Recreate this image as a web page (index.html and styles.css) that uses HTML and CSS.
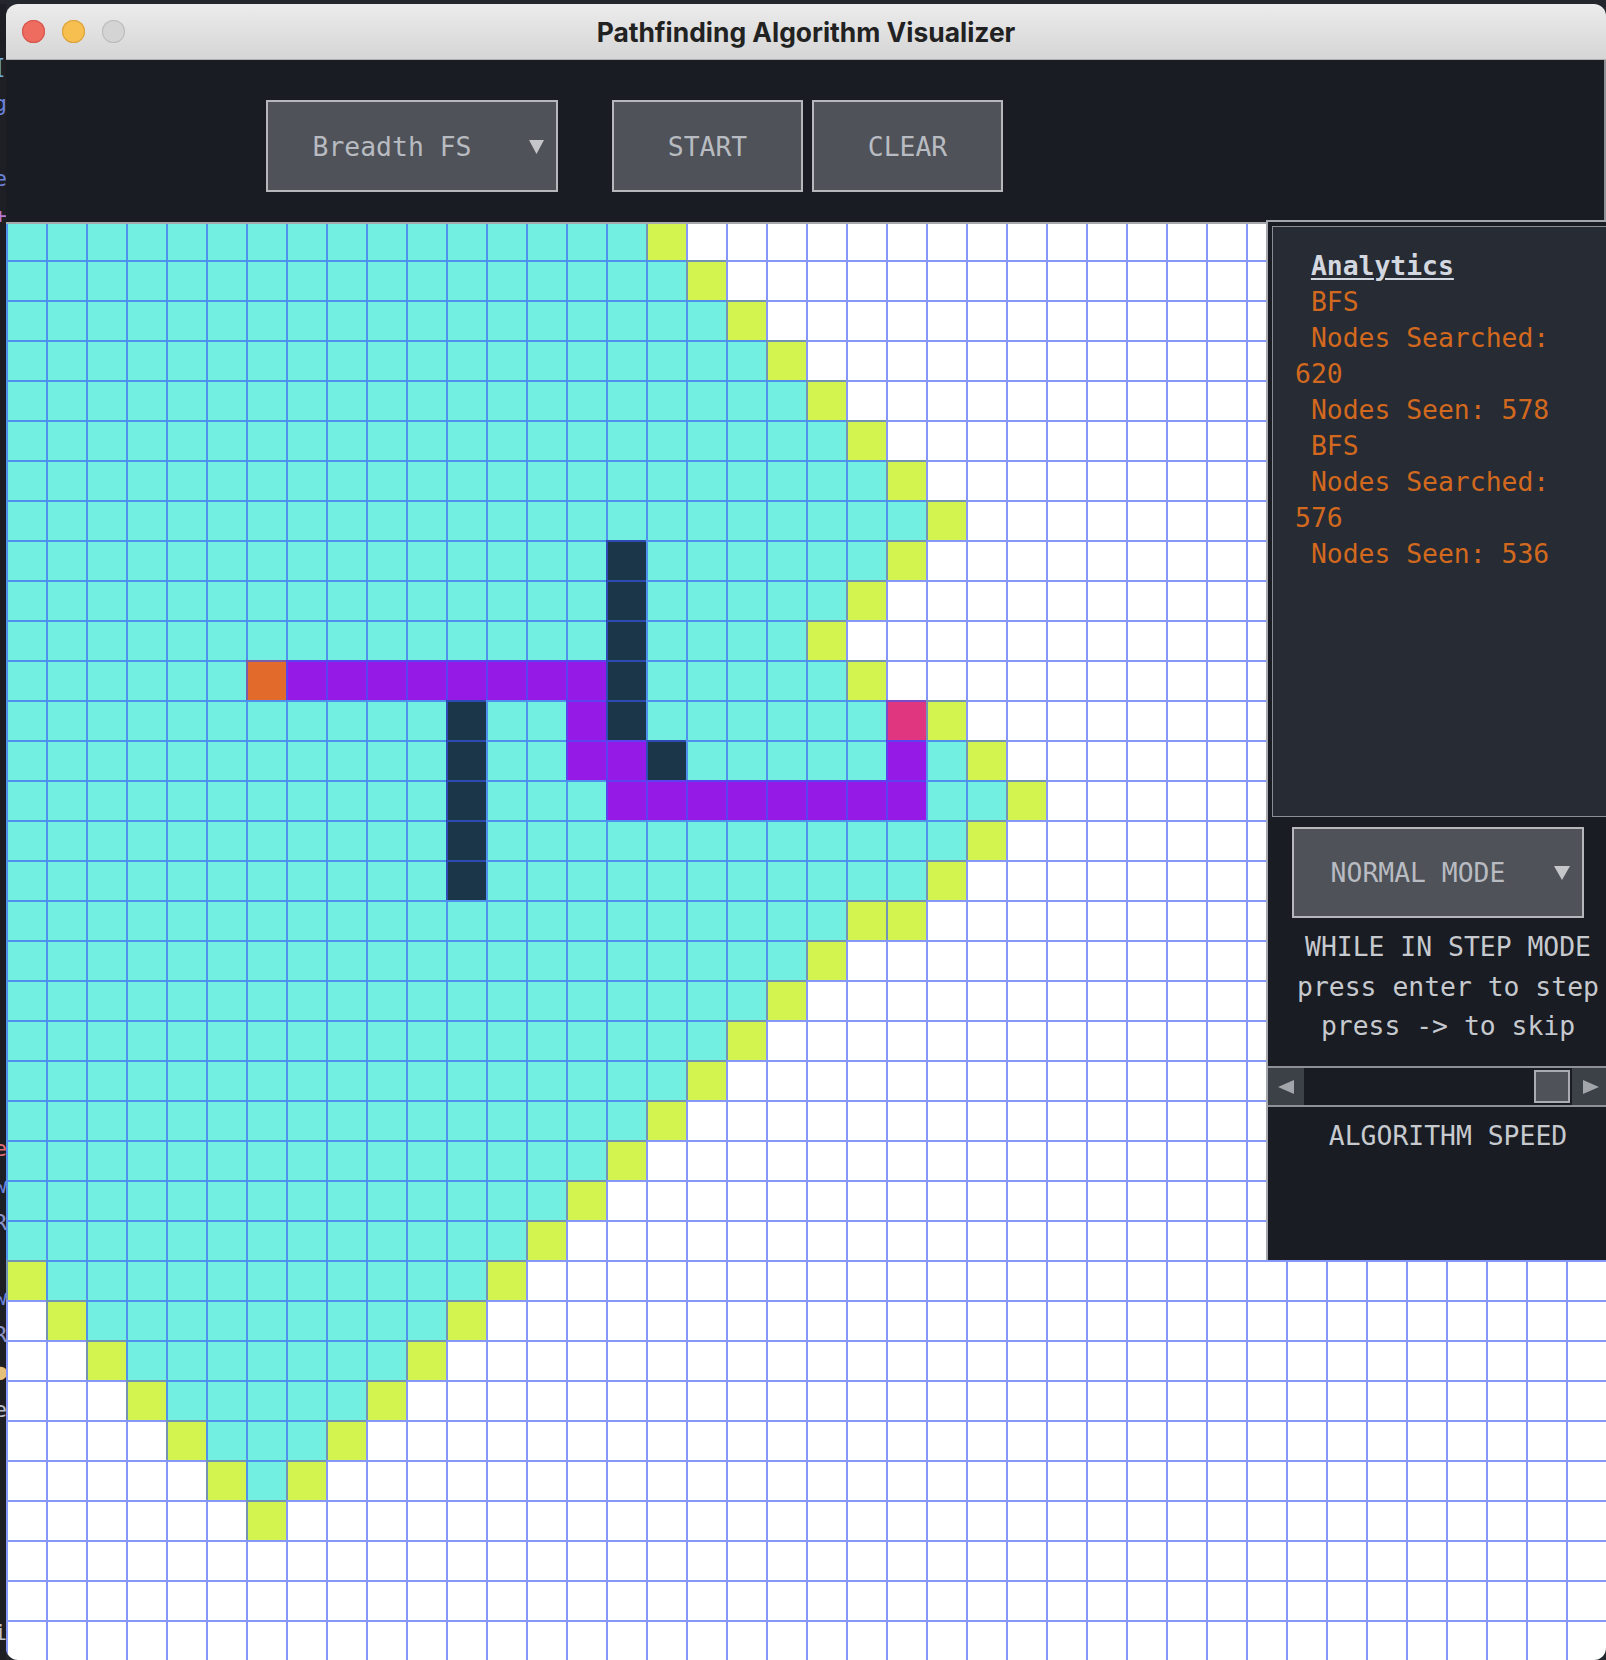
FILE: index.html
```html
<!DOCTYPE html>
<html lang="en">
<head>
<meta charset="utf-8">
<title>Pathfinding Algorithm Visualizer</title>
<link rel="stylesheet" href="styles.css">
</head>
<body>
<div class="backdrop" aria-hidden="true">
<pre class="code"><span class="k-cyan">[</span>
<span class="k-blue">g</span>

<span class="k-blue">e</span>
<span class="k-purple">+</span>
























<span class="k-red">e</span>
<span class="k-blue">w</span>
<span class="k-grey">R</span>

<span class="k-blue">w</span>
<span class="k-grey">R</span>
<span class="k-yellow">●</span>
<span class="k-white">e</span>





<span class="k-white">i</span></pre>
</div>
<div class="window">
  <div class="titlebar">
    <div class="lights">
      <span class="light red"></span>
      <span class="light yellow"></span>
      <span class="light grey"></span>
    </div>
    <div class="title">Pathfinding Algorithm Visualizer</div>
    <div></div>
  </div>
  <div class="header">
    <div class="select algo">
      <span class="select-label">Breadth FS</span>
      <span class="select-arrow"><svg width="15" height="15" viewBox="0 0 15 15"><polygon points="0,1 15,1 7.5,15" fill="#c4c6ca"/></svg></span>
    </div>
    <div class="btn start">START</div>
    <div class="btn clear">CLEAR</div>
  </div>
  <div class="main">
    <div class="board"><div class="grid" id="grid"></div></div>
    <aside class="side">
      <div class="analytics">
        <div class="a-title">Analytics</div>
        <div class="a-line">BFS</div>
        <div class="a-line">Nodes Searched: 620</div>
        <div class="a-line">Nodes Seen: 578</div>
        <div class="a-line">BFS</div>
        <div class="a-line">Nodes Searched: 576</div>
        <div class="a-line">Nodes Seen: 536</div>
      </div>
      <div class="select mode">
        <span class="select-label">NORMAL MODE</span>
        <span class="select-arrow"><svg width="16" height="15" viewBox="0 0 16 15"><polygon points="0,1 16,1 8,15" fill="#c4c6ca"/></svg></span>
      </div>
      <div class="hint">WHILE IN STEP MODE<br>press enter to step<br>press -&gt; to skip</div>
      <div class="slider">
        <div class="s-btn"><svg width="16" height="14" viewBox="0 0 16 14"><polygon points="16,0 16,14 0,7" fill="#a2a5aa"/></svg></div>
        <div class="track"><div class="thumb"></div></div>
        <div class="s-btn right"><svg width="16" height="14" viewBox="0 0 16 14"><polygon points="0,0 0,14 16,7" fill="#a2a5aa"/></svg></div>
      </div>
      <div class="speed-label">ALGORITHM SPEED</div>
    </aside>
  </div>
</div>
<script src="app.js"></script>
</body>
</html>
```
FILE: styles.css
```css
* { box-sizing: border-box; }
html, body { margin: 0; padding: 0; }
body {
  background: #23262d;
  display: flex;
  align-items: flex-start;
  padding-top: 4px;
  height: 1660px;
  overflow: hidden;
}
.backdrop {
  flex: none;
  width: 6px;
  height: 1656px;
  overflow: hidden;
  background: #1d1f25;
}
.code {
  margin: 44px 0 0 -30px;
  width: 37px;
  text-align: right;
  font: 22px/37.3px "DejaVu Sans Mono", monospace;
  color: #abb2bf;
}
.k-cyan { color: #6cb2e0; }
.k-blue { color: #6a82dc; }
.k-purple { color: #b676d8; }
.k-red { color: #e06c75; }
.k-grey { color: #8a93c8; }
.k-yellow { color: #e5c07b; }
.k-white { color: #b9bec8; }

.window {
  flex: none;
  width: 1600px;
  height: 1656px;
  border-radius: 12px;
  overflow: hidden;
  background: #191c23;
  display: flex;
  flex-direction: column;
}
.titlebar {
  flex: none;
  height: 56px;
  display: grid;
  grid-template-columns: 1fr auto 1fr;
  align-items: center;
  background: linear-gradient(#ececec, #d5d5d5);
  border-bottom: 1px solid #afafaf;
}
.lights { display: flex; gap: 17px; padding-left: 16px; }
.light { width: 23px; height: 23px; border-radius: 50%; }
.light.red { background: #ee6b60; box-shadow: inset 0 0 0 1px #d4574d; }
.light.yellow { background: #f6bf4f; box-shadow: inset 0 0 0 1px #d9a23f; }
.light.grey { background: #d4d4d4; box-shadow: inset 0 0 0 1px #bcbcbc; }
.title {
  font: 700 26.4px "Inter", "Noto Sans", sans-serif;
  color: #222222;
}

.header {
  flex: none;
  height: 164px;
  display: flex;
  align-items: flex-start;
  padding: 40px 0 0 260px;
  background: #191c23;
  border-bottom: 2px solid #a6a8ac;
  border-right: 2px solid #8e9195;
}
.select, .btn {
  height: 92px;
  border: 2px solid #b5b7ba;
  background: #4f5258;
  color: #b8bbc1;
  font: 26.4px "DejaVu Sans Mono", monospace;
}
.select {
  width: 292px;
  display: grid;
  grid-template-columns: 248px 40px;
  align-items: center;
}
.select-label { text-align: center; white-space: nowrap; }
.select-arrow { display: flex; justify-content: center; }
.btn {
  width: 191px;
  display: flex;
  align-items: center;
  justify-content: center;
}
.algo { margin-right: 54px; }
.start { margin-right: 9px; }

.main { position: relative; flex: 1; }
.board { height: 100%; overflow: hidden; }
.grid {
  display: grid;
  grid-template-columns: repeat(40, 40px);
  grid-auto-rows: 40px;
  margin-top: -4px;
}
.cell {
  display: block;
  background: #ffffff;
  border-left: 2px solid rgba(58, 88, 246, 0.62);
  border-top: 2px solid rgba(58, 88, 246, 0.62);
}
.cell.seen { background: #72efe0; }
.cell.frontier { background: #d3f34f; }
.cell.path { background: #951ae6; }
.cell.start-node { background: #e26a2b; }
.cell.wall { background: #1c3649; }
.cell.end-node { background: #e0357f; }

.side {
  position: absolute;
  top: -4px;
  left: 1260px;
  width: 362px;
  height: 1040px;
  background: #191c23;
  border-top: 2px solid #a3a6aa;
  border-left: 2px solid #a3a6aa;
  display: flex;
  flex-direction: column;
  align-items: flex-start;
}
.analytics {
  align-self: stretch;
  flex: none;
  margin: 4px 0 0 4px;
  height: 591px;
  border: 1px solid #8b8e93;
  border-right: 0;
  background: #272b33;
  padding: 21px 0 0 22px;
  font: 26.4px/36px "DejaVu Sans Mono", monospace;
  color: #d2691e;
}
.a-title {
  color: #d3d7df;
  font-weight: bold;
  text-decoration: underline;
  text-decoration-thickness: 2px;
  text-underline-offset: 3px;
  text-indent: 1ch;
}
.a-line { width: 17ch; text-indent: 1ch; }

.mode { flex: none; margin: 10px 0 0 24px; height: 91px; }
.hint, .speed-label {
  align-self: stretch;
  text-align: center;
  font: 26.4px/39.5px "DejaVu Sans Mono", monospace;
  color: #c6c9ce;
  white-space: nowrap;
}
.hint { margin-top: 9px; }
.slider {
  flex: none;
  margin-top: 20.5px;
  width: 341px;
  height: 41px;
  border-top: 2px solid #8d9094;
  border-bottom: 2px solid #8d9094;
  display: flex;
  background: #191c23;
}
.s-btn {
  width: 36px;
  background: #3c4047;
  display: flex;
  align-items: center;
  justify-content: center;
}
.s-btn.right { width: 37px; }
.track {
  flex: 1;
  display: flex;
  justify-content: flex-end;
  align-items: center;
  padding-right: 2px;
}
.thumb {
  width: 36px;
  height: 33px;
  border: 2px solid #a9acb0;
  background: #4f5258;
}
.speed-label { margin-top: 9px; }
```
FILE: app.js
```js
(function () {
  var spec = [
    "c16 y1", "c17 y1", "c18 y1", "c19 y1", "c20 y1", "c21 y1", "c22 y1", "c23 y1",
    "c15 w1 c6 y1", "c15 w1 c5 y1", "c15 w1 c4 y1",
    "c6 o1 p8 w1 c5 y1",
    "c11 w1 c2 p1 w1 c6 e1 y1",
    "c11 w1 c2 p2 w1 c5 p1 c1 y1",
    "c11 w1 c3 p8 c2 y1",
    "c11 w1 c12 y1",
    "c11 w1 c11 y1",
    "c21 y2", "c20 y1", "c19 y1", "c18 y1", "c17 y1", "c16 y1", "c15 y1", "c14 y1", "c13 y1",
    "y1 c11 y1", ".1 y1 c9 y1", ".2 y1 c7 y1", ".3 y1 c5 y1", ".4 y1 c3 y1", ".5 y1 c1 y1", ".6 y1",
    "", "", ""
  ];
  var names = { c: "seen", y: "frontier", p: "path", o: "start-node", w: "wall", e: "end-node" };
  var grid = document.getElementById("grid");
  var frag = document.createDocumentFragment();
  spec.forEach(function (s) {
    var row = "";
    s.split(" ").filter(Boolean).forEach(function (t) {
      row += t.charAt(0).repeat(parseInt(t.slice(1), 10));
    });
    while (row.length < 40) row += ".";
    for (var i = 0; i < 40; i++) {
      var ch = row.charAt(i);
      var cell = document.createElement("i");
      cell.className = ch === "." ? "cell" : "cell " + names[ch];
      frag.appendChild(cell);
    }
  });
  grid.appendChild(frag);
})();
```
